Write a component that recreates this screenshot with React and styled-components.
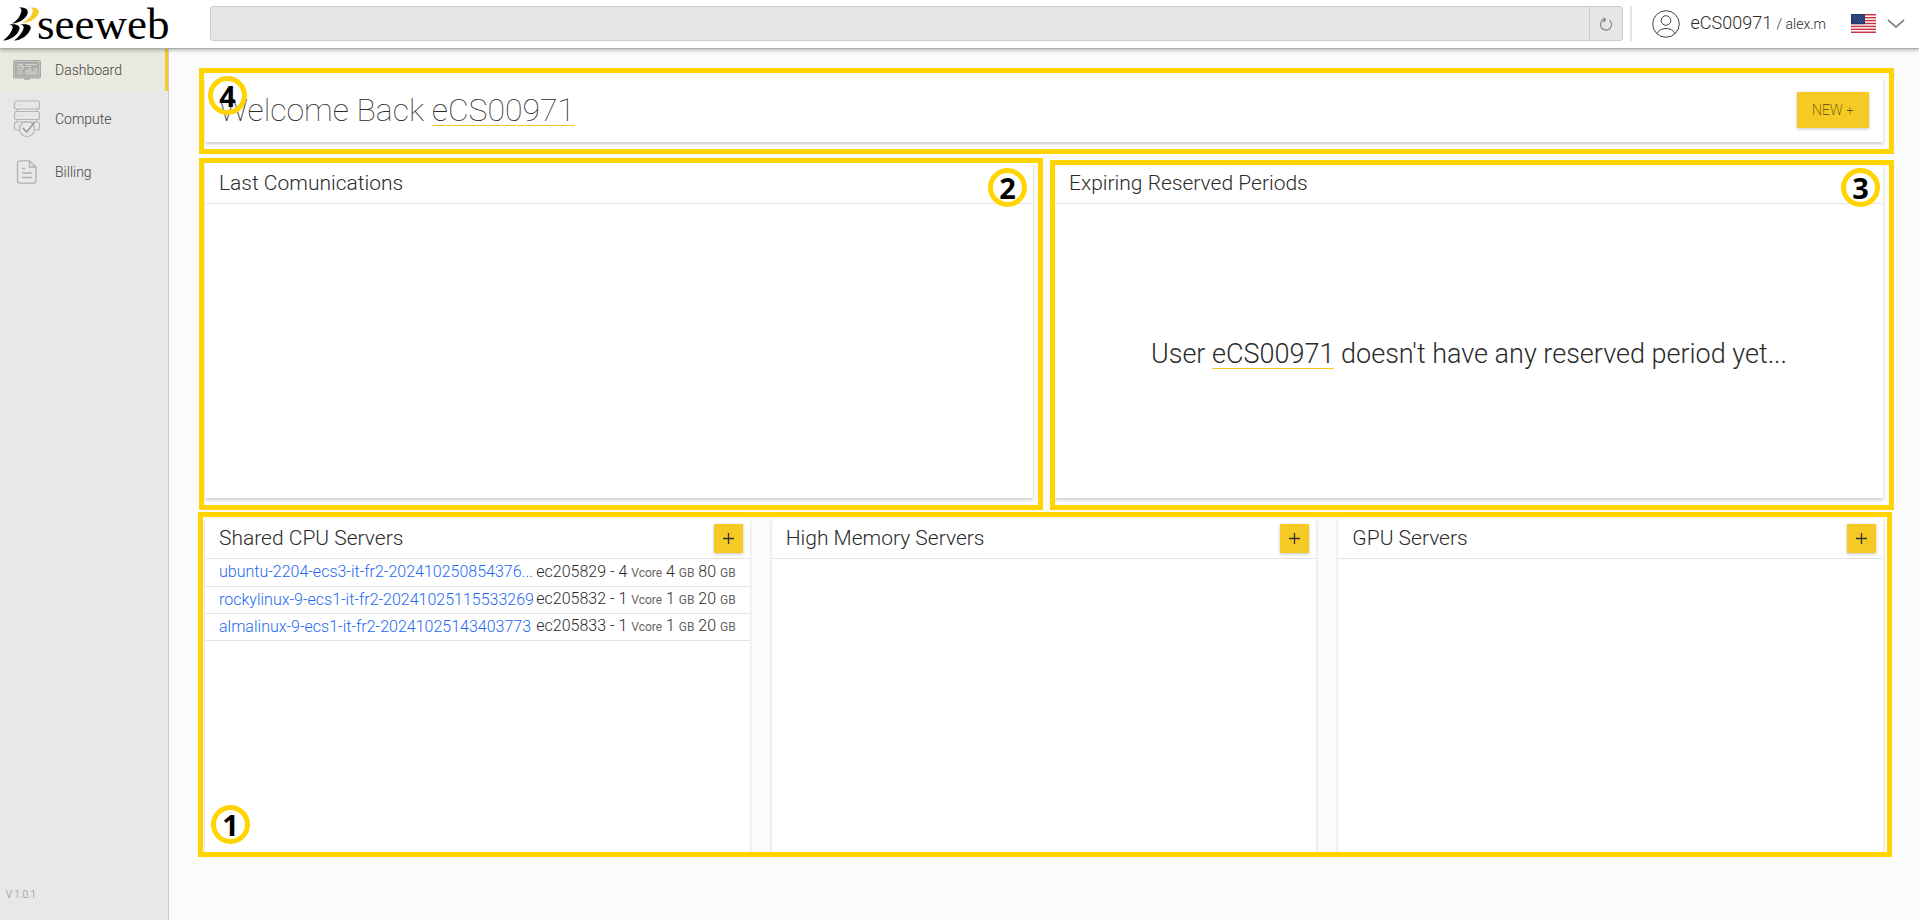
import React from 'react';
import styled, { createGlobalStyle, css } from 'styled-components';

const yellow = '#f6ca24';
const frameYellow = '#ffd400';

const GlobalStyle = createGlobalStyle`
  *, *::before, *::after { box-sizing: border-box; }
  body {
    margin: 0;
    background: #fbfbfb;
    color: #2b2b2b;
    font-family: Roboto, "Liberation Sans", sans-serif;
    font-weight: 300;
    font-size: 16px;
  }
  h1, h2, p, ul { margin: 0; padding: 0; font-weight: 300; }
  button, input, select { font: inherit; color: inherit; }
`;

const Page = styled.div`
  display: flex;
  flex-direction: column;
  min-height: 100vh;
`;

const TopBar = styled.header`
  display: flex;
  align-items: center;
  height: 49px;
  padding-bottom: 1px;
  background: #fff;
  border-bottom: 1px solid #a9ada9;
  box-shadow: 0 1px 4px rgba(0, 0, 0, 0.3);
  z-index: 2;
`;

const Logo = styled.a`
  display: flex;
  align-items: center;
  flex: none;
  width: 210px;
  padding-left: 2px;
  color: #000;
  text-decoration: none;
`;

const LogoText = styled.span`
  font-family: "Liberation Serif", serif;
  font-weight: 400;
  font-size: 45px;
  line-height: 46px;
  margin-left: -3px;
`;

const SearchGroup = styled.form`
  display: flex;
  flex: 1;
  height: 35px;
  border: 1px solid #ccc;
  border-radius: 3px;
  background: #e6e6e6;
`;

const SearchInput = styled.input`
  flex: 1;
  min-width: 0;
  padding: 0 12px;
  border: 0;
  background: transparent;
`;

const RefreshButton = styled.button`
  display: flex;
  align-items: center;
  justify-content: center;
  width: 33px;
  padding: 0;
  border: 0;
  border-left: 1px solid #ccc;
  background: transparent;
`;

const Divider = styled.span`
  width: 2px;
  height: 35px;
  margin: 0 20px 0 7px;
  background: #e2e2ea;
`;

const Account = styled.button`
  display: flex;
  align-items: center;
  gap: 11px;
  padding: 0;
  border: 0;
  background: transparent;
  font-size: 18px;
  line-height: 24px;
`;

const UserName = styled.small`
  font-size: 14px;
`;

const Language = styled.button`
  display: flex;
  align-items: center;
  gap: 11px;
  margin: 0 14px 0 25px;
  padding: 0;
  border: 0;
  background: transparent;
`;

const Body = styled.div`
  display: flex;
  flex: 1;
`;

const Sidebar = styled.nav`
  display: flex;
  flex-direction: column;
  justify-content: space-between;
  flex: none;
  width: 169px;
  background: #e8e8e8;
  border-right: 1px solid #ccc;
`;

const Menu = styled.ul`
  list-style: none;
`;

const MenuLink = styled.a`
  display: flex;
  align-items: center;
  gap: 14px;
  height: ${(p) => p.$height}px;
  padding-left: 13px;
  color: #444;
  font-size: 14px;
  text-decoration: none;
  ${(p) => p.$active && css`
    background: #e9e9df;
    border-right: 3px solid ${yellow};
  `}
`;

const Version = styled.p`
  padding: 0 6px 19px;
  color: #888;
  font-size: 10px;
  line-height: 12px;
`;

const Main = styled.main`
  display: flex;
  flex-direction: column;
  flex: 1;
  gap: 20px;
  min-width: 0;
  padding: 29px 36px 67px;
`;

const Card = styled.section`
  display: flex;
  flex-direction: column;
  flex: 1;
  min-width: 0;
  background: #fff;
  box-shadow: 0 2px 3px rgba(0, 0, 0, 0.18);
`;

const Region = styled.div`
  position: relative;
  display: flex;
  flex: ${(p) => p.$flex || '1'};
  gap: 22px;
  min-width: 0;
`;

const Columns = styled.div`
  display: flex;
  gap: 22px;
  min-height: 335px;
`;

const Frame = styled.div`
  position: absolute;
  inset: ${(p) => p.$inset};
  border: 5px solid ${frameYellow};
  pointer-events: none;
`;

const Badge = styled.span`
  position: absolute;
  ${(p) => p.$place};
  display: flex;
  align-items: center;
  justify-content: center;
  width: 39px;
  height: 39px;
  border: 5px solid ${frameYellow};
  border-radius: 50%;
  color: #000;
  font-family: "Noto Sans", sans-serif;
  font-weight: 700;
  font-size: 29px;
  line-height: 29px;
`;

const Welcome = styled(Card)`
  flex-direction: row;
  align-items: center;
  justify-content: space-between;
  height: 64px;
  margin-bottom: 1px;
  padding: 0 14px;
`;

const WelcomeTitle = styled.h1`
  font-weight: 100;
  font-size: 32px;
  line-height: 36px;
`;

const Underlined = styled.span`
  display: inline-block;
  border-bottom: 1px solid ${yellow};
  line-height: ${(p) => p.$line}px;
`;

const YellowButton = styled.button`
  border: 0;
  padding: 0;
  background: ${yellow};
  box-shadow: 0 1px 3px rgba(0, 0, 0, 0.24);
`;

const NewButton = styled(YellowButton)`
  width: 72px;
  height: 36px;
  font-size: 14px;
  font-weight: 100;
  color: #000;
`;

const AddButton = styled(YellowButton)`
  display: flex;
  align-items: center;
  justify-content: center;
  width: 29px;
  height: 29px;
`;

const CardHeader = styled.header`
  display: flex;
  align-items: center;
  justify-content: space-between;
  height: 41px;
  padding: 0 7px 0 14px;
  border-bottom: 1px solid #e4e4e8;
`;

const CardTitle = styled.h2`
  font-size: 21px;
  line-height: 24px;
`;

const EmptyMessage = styled.div`
  display: flex;
  flex: 1;
  align-items: center;
  justify-content: center;
  padding-top: 6px;
  font-size: 27px;
`;

const ServerTable = styled.table`
  width: 100%;
  border-collapse: collapse;
  table-layout: fixed;
`;

const ServerCell = styled.td`
  height: 27px;
  padding: ${(p) => (p.$name ? '0 0 0 14px' : '0 14px 0 0')};
  border-bottom: 1px solid #e4e4e8;
  line-height: 24px;
  width: ${(p) => (p.$name ? 'auto' : '214px')};
  text-align: ${(p) => (p.$name ? 'left' : 'right')};
  white-space: nowrap;
`;

const ServerLink = styled.a`
  color: #2468f2;
  text-decoration: none;
`;

const Unit = styled.small`
  font-size: 12px;
  font-weight: 400;
  color: #666;
`;

const LogoMark = () => (
  <svg width="38" height="36" viewBox="0 0 38 36" aria-hidden="true">
    <path d="M17 1.500C23 1 27 3 25.500 8C23 13.500 17 17 10 17.500C14 15.500 17 12 18.500 8C20 4.500 20 2.500 17 1.500z" fill="#000" />
    <path d="M28 1.500C34 1 38 3 36.500 7.500C34 13 28 16.500 19.500 17C25 15 28 12 30 8C31.500 4.500 31 2.500 28 1.500z" fill={yellow} />
    <path d="M7 18.500C13 17.500 18.500 19 17.500 23C15.500 29.500 9 34 1 34.500C5 32 8 28 10 24C11.500 20.500 10.500 19 7 18.500z" fill="#000" />
    <path d="M18 18.500C25 17.500 30 19 28.500 23C26 29.500 20 34 12 34.500C16 32 19 28 21 24C22.500 20.500 21.500 19 18 18.500z" fill="#000" />
  </svg>
);

const RefreshIcon = () => (
  <svg width="14" height="14" viewBox="0 0 14 14" fill="none" stroke="#888" strokeWidth="1.200" aria-hidden="true">
    <path d="M3.300 3.500A5.500 5.500 0 1 0 10.500 3.300M2.500 2.800H6.500M4.500 0.500L6.500 2.800L4.500 5" />
  </svg>
);

const UserIcon = () => (
  <svg width="28" height="28" viewBox="0 0 28 28" fill="none" stroke="#444" aria-hidden="true">
    <circle cx="14" cy="14" r="13.300" />
    <circle cx="14" cy="10.500" r="4.800" />
    <path d="M5 23.500c1.500-3.200 5-5 9-5s7.500 1.800 9 5" />
  </svg>
);

const stripes = [0, 1, 2, 3, 4, 5, 6];
const FlagIcon = () => (
  <svg width="25" height="19" viewBox="0 0 25 19" aria-hidden="true">
    <rect width="25" height="19" fill="#fff" />
    {stripes.map((i) => (
      <rect key={i} y={i * 2.92} width="25" height="1.460" fill="#c8333e" />
    ))}
    <rect width="14" height="10.200" fill="#233a70" />
    <path d="M1.500 2h12M2.500 4h11M1.500 6h12M2.500 8h11" stroke="#8593b5" strokeWidth="0.700" strokeDasharray="0.800 1.400" />
  </svg>
);

const ChevronIcon = () => (
  <svg width="18" height="10" viewBox="0 0 18 10" fill="none" stroke="#888" strokeWidth="1.700" aria-hidden="true">
    <path d="M1 1l8 7 8-7" />
  </svg>
);

const PlusIcon = () => (
  <svg width="13" height="13" viewBox="0 0 13 13" stroke="#333" strokeWidth="1.300" aria-hidden="true">
    <path d="M1 6.500h11M6.500 1v11" />
  </svg>
);

const DashboardIcon = () => (
  <svg width="28" height="20" viewBox="0 0 28 20" fill="none" stroke="#a8a8a6" aria-hidden="true">
    <rect x="0.500" y="0.500" width="27" height="17.500" rx="1" fill="#c4c4c0" />
    <rect x="2.500" y="2.500" width="23" height="13.500" fill="#adadaa" />
    <circle cx="7.500" cy="7" r="2.800" stroke="#dcdcd6" />
    <path d="M7.500 4v3h3M12.500 4.500h11M12.500 6.500h6M4 12h6M4 14h6M13 15v-4.500h2V15M16 15V9h2v6M19 15v-3h2v3M22 15V8.500h2V15" stroke="#dcdcd6" strokeWidth="0.800" />
    <path d="M11 19h6" strokeWidth="1.500" />
  </svg>
);

const ComputeIcon = () => (
  <svg width="28" height="38" viewBox="0 0 28 38" fill="none" stroke="#b4b4b4" strokeWidth="1.200" aria-hidden="true">
    <rect x="1.500" y="1" width="25" height="8" rx="2" />
    <rect x="1.500" y="11.500" width="25" height="8" rx="2" />
    <path d="M7 30H3.500a2 2 0 0 1-2-2v-4a2 2 0 0 1 2-2h21a2 2 0 0 1 2 2v4a2 2 0 0 1-2 2H22M4 9v2.500M24 9v2.500M4 19.500V22M24 19.500V22M4.500 5h1M7.500 5h1M4.500 15.500h1M7.500 15.500h1M4.500 26h1" />
    <circle cx="14" cy="29" r="7.500" />
    <path d="M10 28l3.500 4L22 22" stroke="#999" strokeWidth="1.500" />
  </svg>
);

const BillingIcon = () => (
  <svg width="28" height="24" viewBox="0 0 28 24" fill="none" stroke="#b0b0b0" strokeWidth="1.300" aria-hidden="true">
    <path d="M16.500 0.800H7A2.500 2.500 0 0 0 4.500 3.300v17.400A2.500 2.500 0 0 0 7 23.200h13.500a2.500 2.500 0 0 0 2.500-2.500V7zM16.500 0.800V7H23M9 8.500h3M9 13h10M9 17.500h10" />
  </svg>
);

const menu = [
  { label: 'Dashboard', Icon: DashboardIcon, height: 42, active: true },
  { label: 'Compute', Icon: ComputeIcon, height: 56 },
  { label: 'Billing', Icon: BillingIcon, height: 50 },
];

const servers = [
  ['ubuntu-2204-ecs3-it-fr2-202410250854376...', 'ec205829', 4, 4, 80],
  ['rockylinux-9-ecs1-it-fr2-20241025115533269', 'ec205832', 1, 1, 20],
  ['almalinux-9-ecs1-it-fr2-20241025143403773', 'ec205833', 1, 1, 20],
];

const ServerCard = ({ title, rows = [] }) => (
  <Card>
    <CardHeader>
      <CardTitle>{title}</CardTitle>
      <AddButton type="button" aria-label={`Add to ${title}`}><PlusIcon /></AddButton>
    </CardHeader>
    {rows.length > 0 && (
      <ServerTable aria-label={title}>
        <tbody>
          {rows.map(([name, id, cores, ram, disk]) => (
            <tr key={id}>
              <ServerCell $name><ServerLink href="#server">{name}</ServerLink></ServerCell>
              <ServerCell>
                {id} - {cores} <Unit>Vcore</Unit> {ram} <Unit>GB</Unit> {disk} <Unit>GB</Unit>
              </ServerCell>
            </tr>
          ))}
        </tbody>
      </ServerTable>
    )}
  </Card>
);

export default function App() {
  return (
    <Page>
      <GlobalStyle />
      <TopBar>
        <Logo href="#home"><LogoMark /><LogoText>seeweb</LogoText></Logo>
        <SearchGroup>
          <SearchInput type="search" aria-label="Search" />
          <RefreshButton type="button" aria-label="Refresh"><RefreshIcon /></RefreshButton>
        </SearchGroup>
        <Divider />
        <Account type="button">
          <UserIcon />
          <span>eCS00971 <UserName>/ alex.m</UserName></span>
        </Account>
        <Language type="button" aria-label="Language"><FlagIcon /><ChevronIcon /></Language>
      </TopBar>
      <Body>
        <Sidebar>
          <Menu>
            {menu.map(({ label, Icon, height, active }) => (
              <li key={label}>
                <MenuLink href="#menu" $height={height} $active={active}><Icon />{label}</MenuLink>
              </li>
            ))}
          </Menu>
          <Version>V 1.0.1</Version>
        </Sidebar>
        <Main>
          <Region $flex="none">
            <Welcome>
              <WelcomeTitle>Welcome Back <Underlined $line={30}>eCS00971</Underlined></WelcomeTitle>
              <NewButton type="button">NEW +</NewButton>
            </Welcome>
            <Frame $inset="-10px -11px -11px -6px" />
            <Badge $place="top: -2px; left: 3px">4</Badge>
          </Region>
          <Columns>
            <Region>
              <Card>
                <CardHeader><CardTitle>Last Comunications</CardTitle></CardHeader>
              </Card>
              <Frame $inset="-5px -10px -12px -6px" />
              <Badge $place="top: 5px; right: 6px">2</Badge>
            </Region>
            <Region>
              <Card>
                <CardHeader><CardTitle>Expiring Reserved Periods</CardTitle></CardHeader>
                <EmptyMessage>
                  <p>User <Underlined $line={27}>eCS00971</Underlined> doesn't have any reserved period yet...</p>
                </EmptyMessage>
              </Card>
              <Frame $inset="-3px -11px -12px -5px" />
              <Badge $place="top: 5px; right: 3px">3</Badge>
            </Region>
          </Columns>
          <Region>
            <ServerCard title="Shared CPU Servers" rows={servers} />
            <ServerCard title="High Memory Servers" />
            <ServerCard title="GPU Servers" />
            <Frame $inset="-6px -9px -4px -7px" />
            <Badge $place="bottom: 9px; left: 6px">1</Badge>
          </Region>
        </Main>
      </Body>
    </Page>
  );
}
